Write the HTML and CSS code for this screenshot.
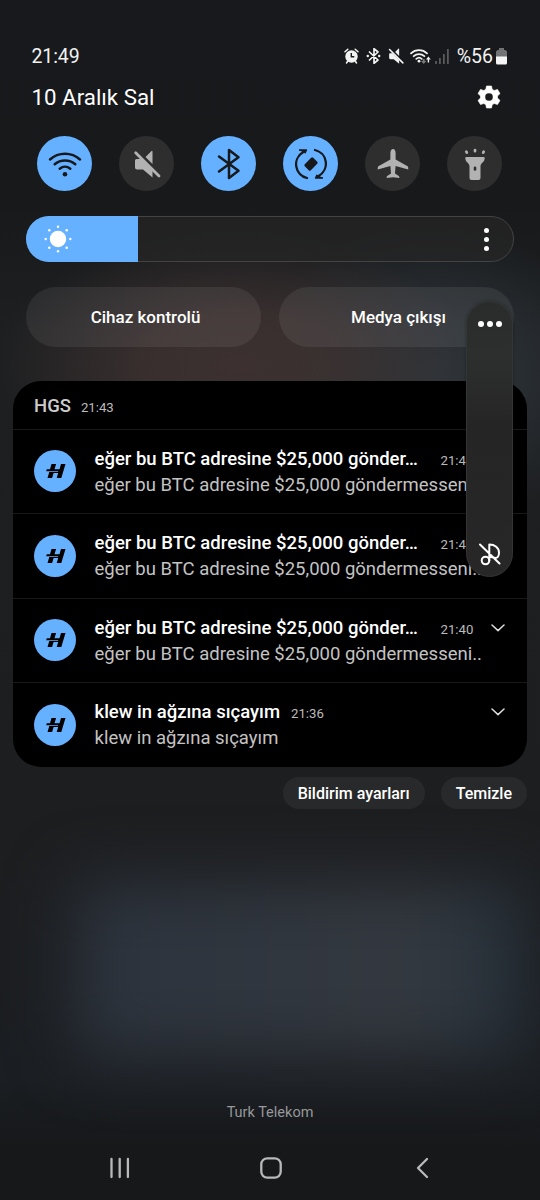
FILE: index.html
```html
<!doctype html>
<html lang="tr">
<head>
<meta charset="utf-8">
<title>Bildirim paneli</title>
<link rel="stylesheet" href="styles.css">
</head>
<body>
<svg class="defs" width="0" height="0">
	<symbol id="logo" viewBox="0 0 42 42">
		<path d="M17.500 14h4.600l-1.600 5.200h5L27 14h4.500l-4.200 14h-4.600l1.500-5h-4.600l-1.500 5h-4.600l1.800-6H24l.3-.8H12.200l.6-2H16z"/>
	</symbol>
	<symbol id="chevron" viewBox="0 0 14 8">
		<path d="M1 1l6 5.600L13 1" fill="none" stroke="currentColor" stroke-width="1.500" stroke-linecap="round" stroke-linejoin="round"/>
	</symbol>
	<symbol id="mute" viewBox="0 0 28 28">
		<path d="M3.500 9h4.300l11.700 11.700v6.800L10 19.500H4A2 2 0 0 1 2 17.500v-7A1.500 1.500 0 0 1 3.500 9zM12.500 7l6-6q1-.5 1 .8V14z" fill="currentColor"/>
		<path d="M2.700 2.700L26 26" stroke="currentColor" stroke-width="2.800" stroke-linecap="round"/>
	</symbol>
</svg>

<div class="screen">
	<div class="status">
		<span class="clock">21:49</span>
		<div class="status-icons">
			<svg width="15" height="16" viewBox="0 0 15 16">
				<path d="M1 3.700l2.800-2.500M14 3.700l-2.800-2.500M3.500 13.500l-1 1.500M11.500 13.500l1 1.500" stroke="#f2f2f2" stroke-width="1.500" stroke-linecap="round"/>
				<circle cx="7.500" cy="8.500" r="6.200" fill="#f2f2f2"/>
				<path d="M7.300 5v3.800h3" fill="none" stroke="#17191c" stroke-width="1.400"/>
			</svg>
			<svg width="15" height="16" viewBox="0 0 15 16">
				<path d="M3.500 4l8.500 8-4 3.300V.7L12 4l-8.500 8" fill="none" stroke="#f2f2f2" stroke-width="1.700" stroke-linejoin="round" stroke-linecap="round"/>
				<circle cx="1.800" cy="8" r="1.200" fill="#f2f2f2"/><circle cx="13.200" cy="8" r="1.200" fill="#f2f2f2"/>
			</svg>
			<svg class="s-mute" width="16" height="16"><use href="#mute"/></svg>
			<svg class="s-wifi" width="21" height="17" viewBox="0 0 21 17">
				<g fill="none" stroke="#f2f2f2" stroke-width="1.800" stroke-linecap="round">
					<path d="M1 5.300a11.500 11.500 0 0 1 16 0M3.700 8.200a7.800 7.800 0 0 1 10.600 0M6.300 10.900a4 4 0 0 1 5.400 0"/>
				</g>
				<circle cx="9" cy="13.200" r="1.400" fill="#f2f2f2"/>
				<path d="M12.700 11v2h-1.700l2.700 3 2.700-3h-1.700v-2z" fill="#77797b"/>
				<path d="M17.700 14.500v-3H16l2.400-3 2.400 3h-1.700v3z" fill="#f2f2f2"/>
			</svg>
			<svg class="s-signal" width="14" height="15" viewBox="0 0 14 15">
				<path d="M1 12v3M4.900 9v6M8.900 5v10M12.900 0v15" stroke="#606264" stroke-width="1.600"/>
			</svg>
			<span class="percent">%56</span>
			<svg class="s-battery" width="11" height="17" viewBox="0 0 11 17">
				<path d="M3 0h5v2h1.500L11 3.500V9H0V3.500L1.500 2H3z" fill="#717375"/>
				<path d="M0 8.500h11v6.500a1.500 1.500 0 0 1-1.500 1.500h-8A1.500 1.500 0 0 1 0 15z" fill="#f5f5f5"/>
			</svg>
		</div>
	</div>

	<div class="date-row">
		<span class="date">10 Aralık Sal</span>
		<svg class="gear" width="24" height="24" viewBox="0 0 24 24">
			<path fill-rule="evenodd" d="M9.500 1h5l.7 3.300 2 1.200 3.300-1.100 2.500 4.200L20.500 11v2l2.500 2.400-2.500 4.200-3.300-1.100-2 1.200-.7 3.300h-5l-.7-3.300-2-1.200-3.300 1.100L1 15.400 3.500 13v-2L1 8.600l2.500-4.200 3.300 1.100 2-1.200zM12 7.900a4.100 4.100 0 1 0 0 8.200 4.100 4.100 0 0 0 0-8.200z" fill="#fff" stroke="#fff" stroke-width=".6" stroke-linejoin="round"/>
		</svg>
	</div>

	<div class="toggles">
		<div class="toggle on">
			<svg width="34" height="28" viewBox="0 0 34 28">
				<path d="M2 9.500a22.500 22.500 0 0 1 30 0M6.700 14.200a16 16 0 0 1 20.600 0M11.700 18.700a8.500 8.500 0 0 1 10.600 0" fill="none" stroke="currentColor" stroke-width="2.500" stroke-linecap="round"/>
				<circle cx="17" cy="24.300" r="2.300" fill="currentColor"/>
			</svg>
		</div>
		<div class="toggle">
			<svg width="28" height="28"><use href="#mute"/></svg>
		</div>
		<div class="toggle on">
			<svg width="24" height="32" viewBox="0 0 24 32">
				<path d="M2 8.500l19.500 14.300-9.500 7.200V2l9.500 7.200L2 23.500" fill="none" stroke="currentColor" stroke-width="2.500" stroke-linecap="round" stroke-linejoin="round"/>
			</svg>
		</div>
		<div class="toggle on">
			<svg width="32" height="32" viewBox="0 0 32 32">
				<path d="M12 30A14 14 0 0 1 8 4.300M20 2a14 14 0 0 1 4 25.700" fill="none" stroke="currentColor" stroke-width="2.300" stroke-linecap="round"/>
				<path d="M4 2h7.500l-1.500 3.200M28 30h-7.500l1.500-3.200" fill="currentColor" stroke="currentColor" stroke-width="1.300" stroke-linejoin="round"/>
				<rect x="11.700" y="10" width="8.600" height="12" rx="1.500" fill="currentColor" transform="rotate(45 16 16)"/>
			</svg>
		</div>
		<div class="toggle">
			<svg width="32" height="32" viewBox="0 0 32 32">
				<path d="M16 1c1.700 0 2.600 2 2.600 4v6.500l12 6.700c.5.300.7 1.100.7 3.300l-12.700-3.500-.6 7.500 3.800 2.500c.5.400.6 1.100.6 2.100L16 29.200l-6.400.9c0-1 .1-1.700.6-2.100L14 25.500l-.6-7.500L.7 21.500c0-2.200.2-3 .7-3.300l12-6.700V5c0-2 .9-4 2.600-4z" fill="currentColor"/>
			</svg>
		</div>
		<div class="toggle">
			<svg width="24" height="34" viewBox="0 0 24 34">
				<path d="M3.800 5.700L3.300 4.700M12 4.200V3M20.200 5.700l.5-1" stroke="currentColor" stroke-width="2.700" stroke-linecap="round"/>
				<path fill-rule="evenodd" d="M3.300 10h17.400a1 1 0 0 1 1 1c0 4.500-4.200 4.800-4.200 8.500v11.500a2 2 0 0 1-2 2h-7a2 2 0 0 1-2-2V19.500C6.500 15.800 2.300 15.500 2.300 11a1 1 0 0 1 1-1zM12 19.500a1.300 1.300 0 0 0-1.300 1.300v1.700a1.300 1.300 0 0 0 2.600 0v-1.700a1.300 1.300 0 0 0-1.300-1.300z" fill="currentColor"/>
			</svg>
		</div>
	</div>

	<div class="brightness">
		<div class="level">
			<svg width="28" height="28" viewBox="0 0 28 28" fill="#fff">
				<circle cx="14" cy="14" r="8.200"/>
				<circle cx="14" cy="1.700" r="1.200"/><circle cx="14" cy="26.300" r="1.200"/>
				<circle cx="1.700" cy="14" r="1.200"/><circle cx="26.300" cy="14" r="1.200"/>
				<circle cx="5.300" cy="5.300" r="1.300"/><circle cx="22.700" cy="5.300" r="1.300"/>
				<circle cx="5.300" cy="22.700" r="1.300"/><circle cx="22.700" cy="22.700" r="1.300"/>
			</svg>
		</div>
		<div class="more"><i></i><i></i><i></i></div>
	</div>

	<div class="pills">
		<div class="pill">Cihaz kontrolü</div>
		<div class="pill">Medya çıkışı</div>
	</div>

	<div class="notes">
		<div class="notes-head"><b>HGS</b><time>21:43</time></div>
		<div class="note">
			<svg class="logo"><use href="#logo"/></svg>
			<div class="note-body">
				<div class="line"><span class="title cut">eğer bu BTC adresine $25,000 gönder…</span><time>21:42</time></div>
				<div class="text">eğer bu BTC adresine $25,000 göndermesseni..</div>
			</div>
			<svg class="chevron"><use href="#chevron"/></svg>
		</div>
		<div class="note">
			<svg class="logo"><use href="#logo"/></svg>
			<div class="note-body">
				<div class="line"><span class="title cut">eğer bu BTC adresine $25,000 gönder…</span><time>21:41</time></div>
				<div class="text">eğer bu BTC adresine $25,000 göndermesseni..</div>
			</div>
			<svg class="chevron"><use href="#chevron"/></svg>
		</div>
		<div class="note">
			<svg class="logo"><use href="#logo"/></svg>
			<div class="note-body">
				<div class="line"><span class="title cut">eğer bu BTC adresine $25,000 gönder…</span><time>21:40</time></div>
				<div class="text">eğer bu BTC adresine $25,000 göndermesseni..</div>
			</div>
			<svg class="chevron"><use href="#chevron"/></svg>
		</div>
		<div class="note">
			<svg class="logo"><use href="#logo"/></svg>
			<div class="note-body">
				<div class="line"><span class="title">klew in ağzına sıçayım</span><time>21:36</time></div>
				<div class="text">klew in ağzına sıçayım</div>
			</div>
			<svg class="chevron"><use href="#chevron"/></svg>
		</div>
	</div>

	<div class="actions">
		<div class="action">Bildirim ayarları</div>
		<div class="action">Temizle</div>
	</div>

	<div class="carrier">Turk Telekom</div>

	<div class="navbar">
		<svg width="20" height="22" viewBox="0 0 20 22"><path d="M1.500 2v18M9.700 2v18M17.900 2v18" stroke="#b8b9ba" stroke-width="2.300" stroke-linecap="round"/></svg>
		<svg class="home" width="22" height="22" viewBox="0 0 22 22"><rect x="1.300" y="1.300" width="19.400" height="19.400" rx="6" fill="none" stroke="#b8b9ba" stroke-width="2.300"/></svg>
		<svg width="13" height="22" viewBox="0 0 13 22"><path d="M11 2L2 11l9 9" fill="none" stroke="#b8b9ba" stroke-width="2.300" stroke-linecap="round" stroke-linejoin="round"/></svg>
	</div>

	<!-- volume slider popup -->
	<div class="volume">
		<div class="dots"><i></i><i></i><i></i></div>
		<svg width="22" height="24" viewBox="0 0 22 24">
			<g fill="none" stroke="#fff" stroke-width="2" stroke-linecap="round" stroke-linejoin="round">
				<circle cx="6.500" cy="18.500" r="3.800"/>
				<path d="M10.300 18.500V2.500c5.500 0 9.700 3.200 9.700 8.200 0 3.300-1.800 5.300-3.500 5.300s-3-1-6.200-1.300M1 2.500l19.500 19"/>
			</g>
		</svg>
	</div>
</div>
</body>
</html>
```

FILE: styles.css
```css
body {
	margin: 0;
	background: #17191c;
	font-family: Roboto, "Noto Sans", sans-serif;
	color: #fff;
}
.defs {
	position: absolute;
}
.screen {
	position: relative;
	z-index: 0;
	box-sizing: border-box;
	display: flex;
	flex-direction: column;
	width: 540px;
	height: 1200px;
	padding-top: 42px;
	overflow: hidden;
	background:
		radial-gradient(ellipse 240px 135px at 235px 365px, rgba(62,50,49,.95), rgba(62,50,49,.8) 40%, rgba(62,50,49,0)),
		radial-gradient(ellipse 190px 150px at 430px 375px, rgba(47,54,60,.9), rgba(47,54,60,.7) 40%, rgba(47,54,60,0)),
		linear-gradient(#17191c 0, #17191b 200px, #1d1f21 330px, #1d1e20 820px, #1b1e22 1080px, #16181a 1150px, #161819 1200px);
}
/* blurred wallpaper patch */
.screen:before {
	content: "";
	position: absolute;
	z-index: -1;
	left: 75px;
	top: 882px;
	width: 450px;
	height: 175px;
	background: linear-gradient(90deg, #2c333d, #343940 75%, #25303a);
	filter: blur(32px);
}
.screen svg { flex: none; }

.status {
	display: flex;
	justify-content: space-between;
	align-items: center;
	height: 28px;
	padding: 0 33px 0 31.500px;
	font-size: 19.500px;
	color: #f2f2f2;
}
.clock { letter-spacing: -.1px; }
.status-icons {
	display: flex;
	align-items: center;
}
.status-icons svg + svg { margin-left: 7px; }
.status-icons .s-wifi { margin-left: 6px; }
.status-icons .s-signal { margin-left: 4px; }
.percent {
	margin: 0 3px 0 8px;
}

.date-row {
	display: flex;
	justify-content: space-between;
	align-items: center;
	height: 54px;
	padding: 0 39px 0 31.500px;
}
.date { font-size: 22.300px; }

.toggles {
	display: flex;
	justify-content: space-between;
	margin-top: 12px;
	padding: 0 38px 0 37px;
}
.toggle {
	display: flex;
	align-items: center;
	justify-content: center;
	width: 55px;
	height: 55px;
	border-radius: 50%;
	background: #2e2e2f;
	color: #b2b2b2;
}
.toggle.on {
	background: #65b1ff;
	color: #17191c;
}

.brightness {
	display: flex;
	justify-content: space-between;
	box-sizing: border-box;
	height: 46px;
	margin: 25px 26px 0;
	border: 1px solid #434343;
	border-radius: 23px;
	background: rgba(38,37,38,.75);
}
.level {
	display: flex;
	align-items: center;
	box-sizing: border-box;
	width: 112px;
	margin: -1px;
	padding-left: 18px;
	border-radius: 23px 0 0 23px;
	background: #65b1ff;
}
.more {
	display: flex;
	flex-direction: column;
	justify-content: center;
	gap: 4px;
	margin-right: 24px;
}
.more i, .dots i {
	width: 5px;
	height: 5px;
	border-radius: 50%;
	background: #fff;
}
.dots i {
	width: 6px;
	height: 6px;
}

.pills {
	display: grid;
	grid-template-columns: 1fr 1fr;
	gap: 18px;
	margin: 25px 26px 0;
}
.pill {
	height: 60px;
	padding-left: 4px;
	border-radius: 30px;
	background: rgba(255,255,255,.07);
	font-size: 17px;
	font-weight: 500;
	line-height: 60px;
	text-align: center;
}

.notes {
	margin: 34px 13px 0;
	border-radius: 28px;
	background: #000;
	overflow: hidden;
}
.notes-head {
	display: flex;
	align-items: baseline;
	box-sizing: border-box;
	height: 47.500px;
	padding: 14px 21px 0;
	line-height: 22px;
	color: #ccc;
}
.notes-head b {
	margin-right: 10px;
	font-size: 18.500px;
	font-weight: 500;
}
.notes time {
	font-size: 13.200px;
	color: #bbb;
}
.note {
	display: flex;
	align-items: center;
	box-sizing: border-box;
	height: 84.500px;
	padding: 0 22px 0 21px;
	border-top: 1px solid #19191a;
}
.logo {
	width: 42px;
	height: 42px;
	border-radius: 50%;
	background: #65b1ff;
}
.note-body {
	flex: 1;
	margin: 1px 0 0 18.500px;
	white-space: nowrap;
}
.line {
	display: flex;
	align-items: baseline;
	line-height: 26px;
}
.title {
	margin-right: 11px;
	font-size: 18.500px;
	font-weight: 500;
}
.cut { width: 335px; }
.text {
	margin-top: -2px;
	font-size: 18.500px;
	line-height: 26px;
	color: #c3c3c3;
}
.chevron {
	width: 14px;
	height: 8px;
	margin-bottom: 25px;
	color: #ddd;
}

.actions {
	display: flex;
	justify-content: flex-end;
	gap: 16px;
	margin: 10px 13px 0;
}
.action {
	padding: 1px 15px 0;
	border-radius: 16px;
	background: #27292b;
	font-size: 16px;
	font-weight: 500;
	line-height: 31px;
}

.carrier {
	margin-top: auto;
	font-size: 14.500px;
	line-height: 20px;
	text-align: center;
	color: #96989a;
}
.navbar {
	display: flex;
	justify-content: space-between;
	align-items: center;
	height: 64px;
	margin-top: 13px;
	padding: 0 111px 0 110px;
}
.home { margin-right: 5px; }

.volume {
	position: absolute;
	left: 466px;
	top: 301px;
	display: flex;
	flex-direction: column;
	justify-content: space-between;
	align-items: center;
	box-sizing: border-box;
	width: 47px;
	height: 276px;
	padding: 19px 0 10px;
	border: 1px solid #343535;
	border-radius: 24px;
	background: linear-gradient(#2a2c2b, #2d2f2e 20%, #252525 45%, #272727);
	box-shadow: 0 0 3px rgba(0,0,0,.35);
}
.dots {
	display: flex;
	gap: 3px;
}
```
